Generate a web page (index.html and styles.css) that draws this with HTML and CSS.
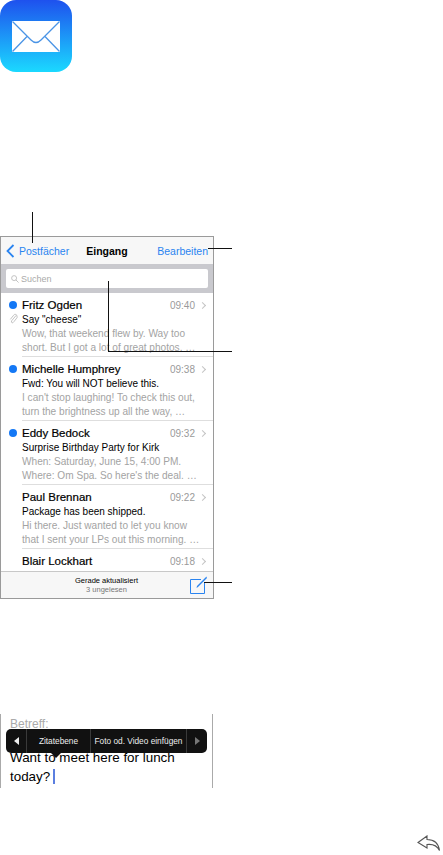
FILE: index.html
```html
<!DOCTYPE html>
<html lang="de">

<head>
    <meta charset="UTF-8" />
    <meta name="viewport" content="width=device-width, initial-scale=1.0" />
    <title>Mail</title>
    <link rel="stylesheet" href="styles.css">
</head>

<body>
    <svg class="app-icon" viewBox="0 0 72 72" aria-hidden="true">
        <defs>
            <linearGradient id="mail-bg" x1="0" y1="0" x2="0" y2="1">
                <stop offset="0" stop-color="#1e51ee" />
                <stop offset="1" stop-color="#1bd9ff" />
            </linearGradient>
        </defs>
        <rect width="72" height="72" rx="16" fill="url(#mail-bg)" />
        <rect x="12" y="21" width="48" height="31" fill="#fff" />
        <path d="M12.500 21.500 L31 40 Q36 45 41 40 L59.500 21.500 M12.500 51.500 L27 36.500 M59.500 51.500 L45 36.500" fill="none" stroke="#4a94e6" stroke-width="1.300" />
    </svg>

    <div class="screen">
        <div class="navbar">
            <span class="navbar__back">
                <svg class="navbar__chevron" viewBox="0 0 9 14" aria-hidden="true">
                    <path d="M7.500 1 L1.500 7 L7.500 13" fill="none" stroke="#2a84f0" stroke-width="1.800" />
                </svg>
                Postfächer
            </span>
            <b class="navbar__title">Eingang</b>
            <span class="navbar__edit">Bearbeiten</span>
        </div>

        <div class="search">
            <div class="search__field">
                <svg class="search__icon" viewBox="0 0 9 9" aria-hidden="true">
                    <circle cx="3.500" cy="3.500" r="2.800" fill="none" stroke="#bbb" />
                    <path d="M5.500 5.500 L8.500 8.500" stroke="#bbb" />
                </svg>
                Suchen
            </div>
        </div>

        <div class="mail">
            <span class="mail__dot"></span>
            <div class="mail__top"><b class="mail__name">Fritz Ogden</b><span class="mail__time">09:40</span><span class="mail__more"></span></div>
            <div class="mail__subject">Say "cheese"</div>
            <svg class="mail__clip" viewBox="0 0 10 12" aria-hidden="true">
                <path d="M8 2.500 L3 8.500 Q2 10.500 3.500 10.800 Q4.500 11 5.500 9.500 L9 5 Q9.500 2 7.500 1.500 Q6 1 5 2.500 L1.500 7" fill="none" stroke="#b5b5b5" stroke-width="0.900" />
            </svg>
            <p class="mail__preview">Wow, that weekend flew by. Way too<br>short. But I got a lot of great photos. …</p>
        </div>
        <div class="mail">
            <span class="mail__dot"></span>
            <div class="mail__top"><b class="mail__name">Michelle Humphrey</b><span class="mail__time">09:38</span><span class="mail__more"></span></div>
            <div class="mail__subject">Fwd: You will NOT believe this.</div>
            <p class="mail__preview">I can't stop laughing! To check this out,<br>turn the brightness up all the way, …</p>
        </div>
        <div class="mail">
            <span class="mail__dot"></span>
            <div class="mail__top"><b class="mail__name">Eddy Bedock</b><span class="mail__time">09:32</span><span class="mail__more"></span></div>
            <div class="mail__subject">Surprise Birthday Party for Kirk</div>
            <p class="mail__preview">When: Saturday, June 15, 4:00 PM.<br>Where: Om Spa. So here's the deal. …</p>
        </div>
        <div class="mail">
            <div class="mail__top"><b class="mail__name">Paul Brennan</b><span class="mail__time">09:22</span><span class="mail__more"></span></div>
            <div class="mail__subject">Package has been shipped.</div>
            <p class="mail__preview">Hi there. Just wanted to let you know<br>that I sent your LPs out this morning. …</p>
        </div>
        <div class="mail mail--cut">
            <div class="mail__top"><b class="mail__name">Blair Lockhart</b><span class="mail__time">09:18</span><span class="mail__more"></span></div>
        </div>

        <div class="toolbar">
            <div class="toolbar__status">
                <span>Gerade aktualisiert</span>
                <span class="toolbar__unread">3 ungelesen</span>
            </div>
            <svg class="toolbar__compose" viewBox="0 0 18 18" aria-hidden="true">
                <path d="M11 3.500 H0.500 V17.500 H14.500 V7" fill="none" stroke="#2a84f0" />
                <path d="M6.500 12 L7 10 L15.500 1.500 L17 0.500 L16.500 2.500 L8 11 Z" fill="#2a84f0" />
            </svg>
        </div>

        <span class="callout callout--back"></span>
        <span class="callout callout--edit"></span>
        <span class="callout callout--search-v"></span>
        <span class="callout callout--search-h"></span>
        <span class="callout callout--compose"></span>
    </div>

    <div class="compose">
        <div class="compose__subject">Betreff:</div>
        <p class="compose__text">Want to meet here for lunch<br>today?<span class="compose__cursor"></span></p>
        <div class="popup">
            <span class="popup__arrow popup__arrow--left"></span>
            <span class="popup__item popup__item--quote">Zitatebene</span>
            <span class="popup__item popup__item--photo">Foto od. Video einfügen</span>
            <span class="popup__arrow popup__arrow--right"></span>
        </div>
    </div>

    <div class="reply-row">
        <svg class="reply-icon" viewBox="0 0 24 16" aria-hidden="true">
            <path d="M10 1 L1 7.500 L10 13 V9.500 Q19 8.500 22.500 15.500 Q21 4.500 10 4.500 Z" fill="none" stroke="#555" stroke-width="1.100" />
        </svg>
    </div>
</body>

</html>
```

FILE: styles.css
```css
* {
    box-sizing: border-box;
}

body {
    margin: 0;
    background-color: #fff;
    font-family: "Liberation Sans", Arial, sans-serif;
    color: #000;
}

p {
    margin: 0;
}

.app-icon {
    display: block;
    width: 72px;
    height: 72px;
}

.screen {
    position: relative;
    width: 214px;
    height: 363px;
    margin-top: 164px;
    border: 1px solid #9a9a9a;
}

/* header */
.navbar {
    display: grid;
    grid-template-columns: 1fr auto 1fr;
    align-items: center;
    height: 27px;
    padding: 0 5px 0 5px;
    background-color: #f7f7f7;
    font-size: 10.500px;
}

.navbar__back {
    display: flex;
    align-items: center;
    gap: 4px;
    color: #2a84f0;
}

.navbar__chevron {
    width: 9px;
    height: 14px;
}

.navbar__title {
    font-size: 10.500px;
}

.navbar__edit {
    justify-self: end;
    color: #2a84f0;
}

.search {
    height: 29px;
    padding: 5px;
    background-color: #c9c9ce;
}

.search__field {
    display: flex;
    align-items: center;
    gap: 2px;
    height: 19px;
    padding-left: 5px;
    border-radius: 2px;
    background-color: #fff;
    color: #aaa;
    font-size: 9px;
}

.search__icon {
    width: 8px;
    height: 8px;
}

/* list rows */
.mail {
    position: relative;
    height: 64px;
    margin-left: 21px;
    padding-top: 5px;
    border-bottom: 1px solid #dedede;
}

.mail--cut {
    height: 22px;
    border-bottom: 0;
}

.mail__dot {
    position: absolute;
    top: 8px;
    left: -13px;
    width: 8px;
    height: 8px;
    border-radius: 50%;
    background-color: #1478f5;
}

.mail__clip {
    position: absolute;
    top: 20px;
    left: -13px;
    width: 9px;
    height: 11px;
}

.mail__top {
    display: flex;
    align-items: center;
    height: 14px;
    padding-right: 5px;
}

.mail__name {
    flex: 1;
    font-size: 11.500px;
    font-weight: 400;
    -webkit-text-stroke: 0.200px #000;
}

.mail__time {
    color: #9a9a9a;
    font-size: 10px;
}

.mail__more {
    width: 5px;
    height: 5px;
    margin: 0 3px 0 5px;
    border-top: 1px solid #c4c4c4;
    border-right: 1px solid #c4c4c4;
    transform: rotate(45deg);
}

.mail__subject {
    height: 14px;
    margin-top: 1px;
    font-size: 10px;
    line-height: 14px;
}

.mail__preview {
    font-size: 10.100px;
    line-height: 13.500px;
    color: #a3a3a3;
}

.toolbar {
    display: grid;
    grid-template-columns: 1fr auto;
    align-items: center;
    height: 27px;
    padding: 0 5px 0 0;
    border-top: 1px solid #c8c8c8;
    background-color: #f7f7f7;
}

.toolbar__status {
    display: flex;
    flex-direction: column;
    align-items: center;
    padding-left: 22px;
    font-size: 7.500px;
    line-height: 9.500px;
}

.toolbar__unread {
    color: #777;
}

.toolbar__compose {
    width: 18px;
    height: 18px;
}

/* callout lines */
.callout {
    position: absolute;
    background-color: #111;
}

.callout--back {
    top: -25px;
    left: 31px;
    width: 1px;
    height: 31px;
}

.callout--edit {
    top: 11px;
    left: 207px;
    width: 24px;
    height: 1px;
}

.callout--search-v {
    top: 44px;
    left: 107px;
    width: 1px;
    height: 71px;
}

.callout--search-h {
    top: 114px;
    left: 107px;
    width: 124px;
    height: 1px;
}

.callout--compose {
    top: 345px;
    left: 203px;
    width: 28px;
    height: 1px;
}

/* compose excerpt */
.compose {
    position: relative;
    width: 213px;
    height: 74px;
    margin-top: 115px;
    padding: 3px 0 0 9px;
    border-left: 1px solid #aaa;
    border-right: 1px solid #aaa;
}

.compose__subject {
    height: 31px;
    color: #aaa;
    font-size: 12px;
}

.compose__text {
    font-size: 13.400px;
    line-height: 19px;
}

.compose__cursor {
    display: inline-block;
    width: 1.500px;
    height: 15px;
    margin-left: 3px;
    vertical-align: -3px;
    background-color: #5b7fe0;
}

.popup {
    position: absolute;
    top: 15px;
    left: 5px;
    display: flex;
    align-items: center;
    width: 201px;
    height: 24px;
    border-radius: 5px;
    background-color: #111;
    color: #eee;
    font-size: 8.300px;
}

.popup::after {
    content: "";
    position: absolute;
    top: 24px;
    left: 45px;
    border-top: 5px solid #111;
    border-left: 5px solid transparent;
    border-right: 5px solid transparent;
}

.popup__arrow {
    display: flex;
    justify-content: center;
    align-items: center;
    width: 20px;
    height: 100%;
}

.popup__arrow--left::before {
    content: "";
    border-right: 5px solid #eee;
    border-top: 4px solid transparent;
    border-bottom: 4px solid transparent;
}

.popup__arrow--right::before {
    content: "";
    border-left: 5px solid #777;
    border-top: 4px solid transparent;
    border-bottom: 4px solid transparent;
}

.popup__item {
    height: 100%;
    line-height: 24px;
    text-align: center;
    border-left: 1px solid #3a3a3a;
}

.popup__item--quote {
    width: 64px;
}

.popup__item--photo {
    flex: 1;
    border-right: 1px solid #3a3a3a;
}

.reply-row {
    display: flex;
    justify-content: flex-end;
    margin-top: 47px;
    padding-right: 2px;
}

.reply-icon {
    width: 24px;
    height: 16px;
}
```
